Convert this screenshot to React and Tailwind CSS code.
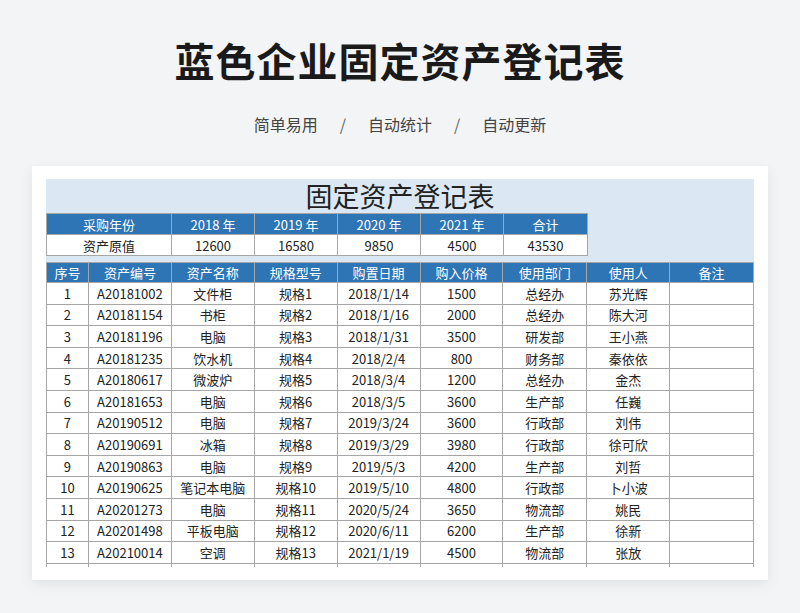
const rows = [
["1","A20181002","文件柜","规格1","2018/1/14","1500","总经办","苏光辉"],
["2","A20181154","书柜","规格2","2018/1/16","2000","总经办","陈大河"],
["3","A20181196","电脑","规格3","2018/1/31","3500","研发部","王小燕"],
["4","A20181235","饮水机","规格4","2018/2/4","800","财务部","秦依依"],
["5","A20180617","微波炉","规格5","2018/3/4","1200","总经办","金杰"],
["6","A20181653","电脑","规格6","2018/3/5","3600","生产部","任巍"],
["7","A20190512","电脑","规格7","2019/3/24","3600","行政部","刘伟"],
["8","A20190691","冰箱","规格8","2019/3/29","3980","行政部","徐可欣"],
["9","A20190863","电脑","规格9","2019/5/3","4200","生产部","刘哲"],
["10","A20190625","笔记本电脑","规格10","2019/5/10","4800","行政部","卜小波"],
["11","A20201273","电脑","规格11","2020/5/24","3650","物流部","姚民"],
["12","A20201498","平板电脑","规格12","2020/6/11","6200","生产部","徐新"],
["13","A20210014","空调","规格13","2021/1/19","4500","物流部","张放"],
["","","","","","","",""],
];
const widths = [42,83,83,83,83,83,84,83,84];
const heads = ["序号","资产编号","资产名称","规格型号","购置日期","购入价格","使用部门","使用人","备注"];
const sumW = [125,83,83,83,83,84];
const sumH = ["采购年份","2018 年","2019 年","2020 年","2021 年","合计"];
const sumV = ["资产原值","12600","16580","9850","4500","43530"];
const font = { fontFamily: '"Noto Sans CJK SC", "Noto Sans", sans-serif' };
export default function App() {
  return (
    <div className="w-[800px] h-[613px] bg-[#f3f4f6] overflow-hidden" style={font}>
      <div className="h-[160px] bg-[#f3f4f6] flex flex-col items-center">
        <div className="mt-[32px] text-[40px] leading-[56px] font-bold text-[#1a1a1a] tracking-[1px]">蓝色企业固定资产登记表</div>
        <div className="mt-[24px] flex gap-[22px] text-[16px] text-[#444] leading-[24px]">
          <span>简单易用</span><span className="text-[#666]">/</span><span>自动统计</span><span className="text-[#666]">/</span><span>自动更新</span>
        </div>
      </div>
      <div className="ml-[32px] mt-[6px] w-[736px] h-[414px] bg-white shadow-[0_4px_12px_rgba(0,0,0,0.08)] pt-[13px] pl-[14px]">
        <div className="w-[708px] h-[388px] overflow-hidden">
          <div className="bg-[#dbe8f4] pb-[6px]">
            <div className="h-[34px] flex items-center justify-center text-[27px] leading-[34px] text-[#222]">固定资产登记表</div>
            <table className="border-collapse text-[13px]" style={{tableLayout:"fixed"}}>
              <tbody>
                <tr className="h-[21px]">
                  {sumH.map((h,i)=>(<td key={i} style={{width:sumW[i]}} className="bg-[#2e75b6] text-white text-center border border-[#a6a6a6] p-0 leading-[19px]">{h}</td>))}
                </tr>
                <tr className="h-[21px]">
                  {sumV.map((h,i)=>(<td key={i} className="bg-white text-[#222] text-center border border-[#a6a6a6] p-0 leading-[19px]">{h}</td>))}
                </tr>
              </tbody>
            </table>
          </div>
          <table className="border-collapse text-[13px]" style={{tableLayout:"fixed"}}>
            <tbody>
              <tr className="h-[20px]">
                {heads.map((h,i)=>(<td key={i} style={{width:widths[i]}} className="bg-[#2e75b6] text-white text-center border border-[#a6a6a6] p-0 leading-[18px]">{h}</td>))}
              </tr>
              {rows.map((r,j)=>(
                <tr key={j} className="h-[21.6px]">
                  {[...r,""].map((c,i)=>(<td key={i} className="bg-white text-[#222] text-center border border-[#a6a6a6] p-0 leading-[19px]">{c}</td>))}
                </tr>
              ))}
            </tbody>
          </table>
        </div>
      </div>
    </div>
  );
}
